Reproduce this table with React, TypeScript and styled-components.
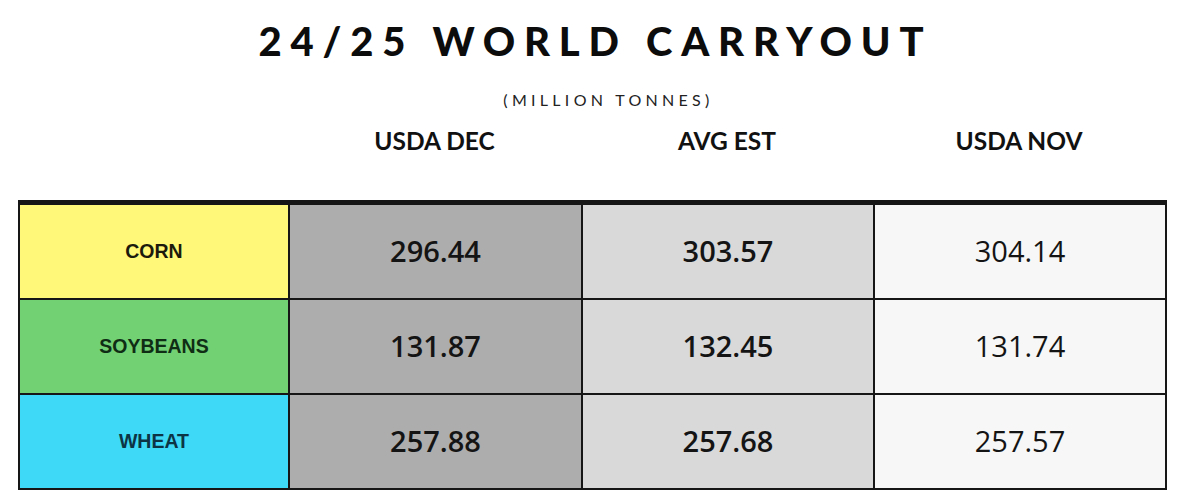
import React from "react";
import styled, { createGlobalStyle } from "styled-components";

const Global = createGlobalStyle`
  html, body { margin: 0; padding: 0; background: #ffffff; }
  body { width: 1179px; height: 502px; overflow: hidden; }
`;

const Page = styled.div`
  width: 1179px;
  height: 502px;
  display: flex;
  flex-direction: column;
  align-items: stretch;
  padding-top: 17px;
  box-sizing: border-box;
`;

const Title = styled.h1`
  margin: 0;
  font-family: Lato, "Open Sans", sans-serif;
  font-weight: 900;
  font-size: 40px;
  line-height: 48px;
  letter-spacing: 8.8px;
  text-align: center;
  color: #0c0c0c;
  padding-left: 12px;
`;

const Subtitle = styled.div`
  margin-top: 25px;
  font-family: Lato, "Open Sans", sans-serif;
  font-weight: 400;
  font-size: 16px;
  line-height: 20px;
  letter-spacing: 4.3px;
  text-align: center;
  color: #222;
  padding-left: 38px;
`;

const columns = "270px 293px 292px 292px";

const HeaderRow = styled.div`
  margin: 16px 0 0 18px;
  width: 1149px;
  display: grid;
  grid-template-columns: ${columns};
`;

const HeaderCell = styled.div`
  font-family: Lato, "Open Sans", sans-serif;
  font-weight: 700;
  font-size: 24.5px;
  line-height: 30px;
  text-align: center;
  color: #111;
`;

const Table = styled.div`
  margin: 44px 0 0 18px;
  width: 1149px;
  box-sizing: border-box;
  display: grid;
  grid-template-columns: 268px 291px 290px 290px;
  grid-auto-rows: 93px;
  gap: 2px;
  padding: 5px 2px 2px 2px;
  background: #161616;
`;

const LabelCell = styled.div<{ $bg: string; $fg: string }>`
  display: flex;
  align-items: center;
  justify-content: center;
  background: ${(p) => p.$bg};
  color: ${(p) => p.$fg};
  font-family: "Liberation Sans", Arial, sans-serif;
  font-weight: 700;
  font-size: 19.5px;
`;

const ValueCell = styled.div<{ $bg: string; $bold?: boolean }>`
  display: flex;
  align-items: center;
  justify-content: center;
  background: ${(p) => p.$bg};
  color: #141414;
  font-family: "Open Sans", "Noto Sans", sans-serif;
  font-weight: ${(p) => (p.$bold ? 600 : 400)};
  font-size: 29px;
  padding-bottom: 3px;
  box-sizing: border-box;
`;

const rows = [
  { label: "CORN", bg: "#fff878", fg: "#1b1a0c", vals: ["296.44", "303.57", "304.14"] },
  { label: "SOYBEANS", bg: "#72d173", fg: "#0f2c14", vals: ["131.87", "132.45", "131.74"] },
  { label: "WHEAT", bg: "#3dd9f6", fg: "#0c3445", vals: ["257.88", "257.68", "257.57"] },
];

const colBg = ["#adadad", "#d9d9d9", "#f7f7f7"];

export default function App() {
  return (
    <Page>
      <Global />
      <Title>24/25 WORLD CARRYOUT</Title>
      <Subtitle>(MILLION TONNES)</Subtitle>
      <HeaderRow>
        <div />
        <HeaderCell>USDA DEC</HeaderCell>
        <HeaderCell>AVG EST</HeaderCell>
        <HeaderCell>USDA NOV</HeaderCell>
      </HeaderRow>
      <Table>
        {rows.map((r) => (
          <React.Fragment key={r.label}>
            <LabelCell $bg={r.bg} $fg={r.fg}>{r.label}</LabelCell>
            {r.vals.map((v, i) => (
              <ValueCell key={i} $bg={colBg[i]} $bold={i < 2}>
                {v}
              </ValueCell>
            ))}
          </React.Fragment>
        ))}
      </Table>
    </Page>
  );
}
